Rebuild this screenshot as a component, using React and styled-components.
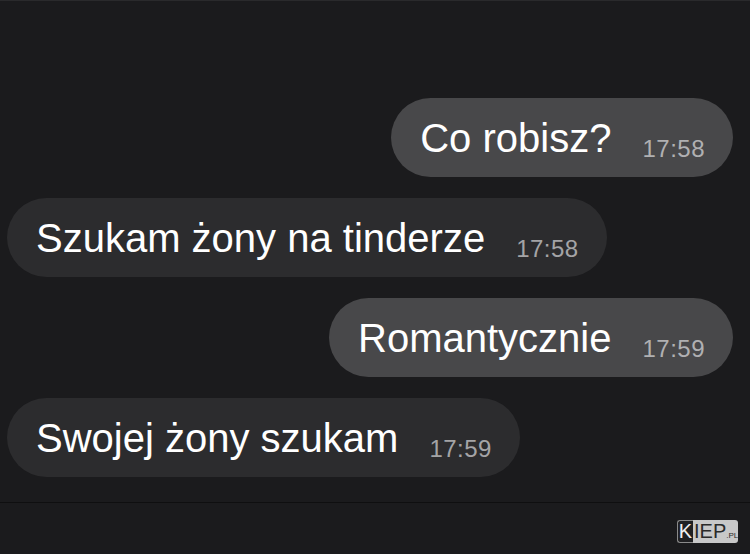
import React from "react";
import styled, { createGlobalStyle } from "styled-components";

const GlobalStyle = createGlobalStyle`
  html, body {
    margin: 0;
    padding: 0;
    background: #1b1b1d;
  }
  body {
    font-family: "Liberation Sans", Arial, sans-serif;
  }
`;

const MESSAGES = [
  { text: "Co robisz?", time: "17:58", mine: true },
  { text: "Szukam żony na tinderze", time: "17:58", mine: false },
  { text: "Romantycznie", time: "17:59", mine: true },
  { text: "Swojej żony szukam", time: "17:59", mine: false },
];

const App = () => {
  return (
    <>
      <GlobalStyle />
      <Screen>
        <Thread>
          {MESSAGES.map((m, i) => (
            <Row key={i} $mine={m.mine}>
              <Bubble $mine={m.mine}>
                <Text>{m.text}</Text>
                <Time $mine={m.mine}>{m.time}</Time>
              </Bubble>
            </Row>
          ))}
        </Thread>
        <Footer>
          <Watermark>
            <WatermarkK>K</WatermarkK>
            <WatermarkRest>
              IEP<small>.PL</small>
            </WatermarkRest>
          </Watermark>
        </Footer>
      </Screen>
    </>
  );
};

const Screen = styled.div`
  width: 750px;
  height: 554px;
  display: flex;
  flex-direction: column;
  background: #1b1b1d;
  border-top: 1px solid #2a2a2c;
  box-sizing: border-box;
  overflow: hidden;
`;

const Thread = styled.div`
  display: flex;
  flex-direction: column;
  gap: 21px;
  padding: 97px 17px 0 7px;
  height: 501px;
  box-sizing: border-box;
`;

const Row = styled.div`
  display: flex;
  justify-content: ${(p) => (p.$mine ? "flex-end" : "flex-start")};
`;

const Bubble = styled.div`
  height: 79px;
  box-sizing: border-box;
  display: flex;
  align-items: center;
  gap: 31px;
  padding: 0 28px 0 29px;
  border-radius: 40px;
  background: ${(p) => (p.$mine ? "#48484a" : "#2c2c2e")};
`;

const Text = styled.span`
  font-size: 40px;
  line-height: 1;
  color: #ffffff;
  white-space: nowrap;
`;

const Time = styled.span`
  align-self: flex-end;
  margin-bottom: 16px;
  font-size: 24px;
  line-height: 1;
  color: ${(p) => (p.$mine ? "#b0b0b2" : "#a4a4a6")};
  letter-spacing: 0.5px;
`;

const Footer = styled.div`
  flex: 1;
  border-top: 1px solid #0f0f10;
  display: flex;
  justify-content: flex-end;
  align-items: flex-start;
  padding: 17px 12px 0 0;
`;

const Watermark = styled.div`
  display: flex;
  height: 23px;
  font-family: "Liberation Sans", Arial, sans-serif;
`;

const WatermarkK = styled.span`
  width: 16px;
  box-sizing: border-box;
  border: 1px solid #8a8a8a;
  border-right: none;
  border-radius: 3px 0 0 3px;
  background: #202022;
  color: #f0f0f0;
  font-size: 20px;
  line-height: 21px;
  text-align: center;
`;

const WatermarkRest = styled.span`
  width: 45px;
  box-sizing: border-box;
  background: #c8c8c8;
  border-radius: 0 3px 3px 0;
  color: #2a2a2a;
  font-size: 20px;
  line-height: 23px;
  padding-left: 1px;

  small {
    font-size: 8px;
  }
`;

export default App;
